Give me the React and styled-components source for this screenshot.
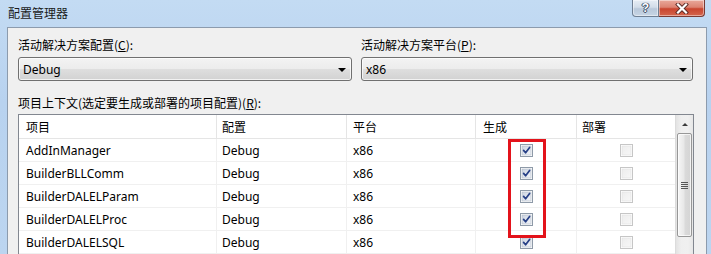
import React from "react";
import styled, { createGlobalStyle } from "styled-components";

const Global = createGlobalStyle`
  html, body { margin: 0; padding: 0; background: #b9d3ef; }
  body { font-family: "Noto Sans", "Noto Sans CJK SC", sans-serif; font-size: 12px; color: #000; }
`;

const Win = styled.div`
  width: 711px;
  height: 254px;
  overflow: hidden;
  display: flex;
  flex-direction: column;
  padding: 0 4px 0 7px;
  box-sizing: border-box;
  background: linear-gradient(180deg, #c3dbf3 0%, #b8d2ef 40%, #bcd5f0 100%);
`;

const TitleBar = styled.div`
  height: 27px;
  flex: none;
  display: flex;
  align-items: flex-start;
  justify-content: space-between;
  padding-right: 2px;
`;

const Title = styled.div`
  font-family: "Noto Sans CJK SC", sans-serif;
  font-size: 12px;
  line-height: 16px;
  padding: 5px 0 0 1px;
  color: #1a1a1a;
`;

const Caption = styled.div`
  display: flex;
`;

const CapBtn = styled.div`
  height: 17px;
  box-sizing: border-box;
  display: flex;
  align-items: center;
  justify-content: center;
  border: 1px solid ${(p) => (p.$close ? "#7a3a33" : "#6f7f93")};
  border-top: none;
  width: ${(p) => (p.$close ? "46px" : "27px")};
  border-radius: ${(p) => (p.$close ? "0 0 4px 0" : "0 0 0 4px")};
  border-left: ${(p) => (p.$close ? "none" : undefined)};
  background: ${(p) =>
    p.$close
      ? "linear-gradient(180deg, #e9a99c 0%, #dc8372 45%, #c9452f 55%, #d4654d 100%)"
      : "linear-gradient(180deg, #e6edf5 0%, #d3dde9 45%, #b9c8da 55%, #c7d5e5 100%)"};
  box-shadow: inset 0 0 0 1px rgba(255, 255, 255, 0.45);
`;

const Q = styled.span`
  font-family: "Liberation Sans", sans-serif;
  font-weight: bold;
  font-size: 12px;
  line-height: 12px;
  color: #fff;
  text-shadow: 0 0 1px #2a3a55, 0 0 1px #2a3a55, 1px 0 0 #4a5a75, -1px 0 0 #4a5a75, 0 1px 0 #4a5a75;
`;

const Panel = styled.div`
  flex: 1;
  min-height: 0;
  background: #f0f0f0;
  border: 1px solid #8c9bad;
  border-bottom: none;
  padding: 9px 12px 0 10px;
  display: flex;
  flex-direction: column;
`;

const Label = styled.div`
  font-family: "Noto Sans CJK SC", sans-serif;
  font-size: 12px;
  line-height: 16px;
  height: 16px;
  white-space: nowrap;
  u { text-decoration: underline; text-underline-offset: 1px; }
`;

const ComboRow = styled.div`
  display: grid;
  grid-template-columns: 334px 1fr;
  column-gap: 9px;
`;

const Field = styled.div`
  display: flex;
  flex-direction: column;
  gap: 4px;
`;

const Combo = styled.div`
  height: 24px;
  box-sizing: border-box;
  border: 1px solid #707070;
  border-radius: 3px;
  margin-right: ${(p) => p.$mr || 0}px;
  background: linear-gradient(180deg, #f3f3f3 0%, #ececec 48%, #dedede 52%, #d2d2d2 100%);
  box-shadow: inset 0 0 0 1px rgba(255, 255, 255, 0.7);
  display: flex;
  align-items: center;
  justify-content: space-between;
  padding: 0 5px 0 4px;
  font-size: 12px;
`;

const Arrow = styled.span`
  width: 0;
  height: 0;
  border-left: 4px solid transparent;
  border-right: 4px solid transparent;
  border-top: 4px solid #000;
  margin-top: 1px;
`;

const GridLabel = styled(Label)`
  margin-top: 14px;
  margin-bottom: 3px;
`;

const Grid = styled.div`
  position: relative;
  border: 1px solid #828790;
  border-bottom: none;
  background: #fff;
  display: flex;
  flex: 1;
  min-height: 0;
`;

const Table = styled.div`
  width: 656px;
  display: flex;
  flex-direction: column;
`;

const Row = styled.div`
  display: grid;
  grid-template-columns: 198px 130px 129px 101px 98px;
  height: ${(p) => (p.$head ? 24 : 23)}px;
  box-sizing: border-box;
  border-bottom: 1px solid ${(p) => (p.$head ? "#e5e5e5" : "#f0f0f0")};
  flex: none;
`;

const Cell = styled.div`
  display: flex;
  align-items: center;
  justify-content: ${(p) => (p.$center ? "center" : "flex-start")};
  padding-left: ${(p) => (p.$center ? 0 : p.$pl || 6)}px;
  font-family: ${(p) => (p.$cjk ? '"Noto Sans CJK SC", sans-serif' : '"Noto Sans", sans-serif')};
  font-size: 12px;
  white-space: nowrap;
  border-right: 1px solid ${(p) => (p.$head ? "#e5e5e5" : "#f0f0f0")};
  &:last-child { border-right: none; }
  padding-bottom: ${(p) => (p.$head ? 1 : 0)}px;
`;

const Scroll = styled.div`
  width: 18px;
  box-sizing: border-box;
  border-left: 1px solid #dcdcdc;
  background: linear-gradient(90deg, #e3e3e3 0%, #efefef 30%, #f0f0f0 70%, #e7e7e7 100%);
  display: flex;
  flex-direction: column;
  align-items: center;
`;

const ScrollBtn = styled.div`
  height: 17px;
  width: 100%;
  display: flex;
  align-items: center;
  justify-content: center;
  padding-top: 2px;
  box-sizing: border-box;
`;

const UpArrow = styled.span`
  width: 0;
  height: 0;
  border-left: 3px solid transparent;
  border-right: 3px solid transparent;
  border-bottom: 3px solid #3c3c3c;
`;

const Thumb = styled.div`
  width: 15px;
  height: 104px;
  margin-top: 1px;
  box-sizing: border-box;
  border: 1px solid #979797;
  border-radius: 2px;
  background: linear-gradient(90deg, #f6f6f6 0%, #e8e8e8 45%, #dadada 55%, #d4d4d4 100%);
  box-shadow: inset 0 0 0 1px rgba(255, 255, 255, 0.7);
  display: flex;
  align-items: center;
  justify-content: center;
`;

const Mark = styled.div`
  position: absolute;
  left: 489px;
  top: 24px;
  width: 38px;
  height: 99px;
  box-sizing: border-box;
  border: 3px solid #e3131b;
  pointer-events: none;
`;

const Check = ({ on }) => (
  <svg width="13" height="13" viewBox="0 0 13 13">
    <defs>
      <linearGradient id={on ? "cbOn" : "cbOff"} x1="0" y1="0" x2="1" y2="1">
        <stop offset="0" stopColor={on ? "#cbd3e0" : "#ededed"} />
        <stop offset="1" stopColor={on ? "#f4f6fa" : "#f7f7f7"} />
      </linearGradient>
    </defs>
    <rect x="0.5" y="0.5" width="12" height="12" fill="#fff" stroke={on ? "#8e9aa8" : "#c6c6c6"} />
    <rect x="2" y="2" width="9" height="9" fill={`url(#${on ? "cbOn" : "cbOff"})`} stroke={on ? "#aeb8c6" : "#e0e0e0"} strokeWidth="0.6" />
    {on && <path d="M3.6 6.4 L5.6 8.8 L9.6 3.4" fill="none" stroke="#263f86" strokeWidth="1.7" strokeLinecap="round" strokeLinejoin="round" />}
  </svg>
);

const Grip = () => (
  <svg width="7" height="7" viewBox="0 0 7 7">
    {[0.5, 2.5, 4.5, 6.5].map((y) => (
      <line key={y} x1="0" y1={y} x2="7" y2={y} stroke="#555" strokeWidth="1" />
    ))}
  </svg>
);

const CloseX = () => (
  <svg width="14" height="11" viewBox="0 0 14 11">
    <path d="M3 1.5 L11 9.5 M11 1.5 L3 9.5" stroke="#5a2a25" strokeWidth="4" strokeLinecap="square" />
    <path d="M3 1.5 L11 9.5 M11 1.5 L3 9.5" stroke="#fff" strokeWidth="2.2" strokeLinecap="square" />
  </svg>
);

const projects = ["AddInManager", "BuilderBLLComm", "BuilderDALELParam", "BuilderDALELProc", "BuilderDALELSQL"];

export default function App() {
  return (
    <>
      <Global />
      <Win>
        <TitleBar>
          <Title>配置管理器</Title>
          <Caption>
            <CapBtn><Q>?</Q></CapBtn>
            <CapBtn $close><CloseX /></CapBtn>
          </Caption>
        </TitleBar>
        <Panel>
          <ComboRow>
            <Field>
              <Label>活动解决方案配置(<u>C</u>):</Label>
              <Combo>Debug<Arrow /></Combo>
            </Field>
            <Field>
              <Label>活动解决方案平台(<u>P</u>):</Label>
              <Combo $mr={1}>x86<Arrow /></Combo>
            </Field>
          </ComboRow>
          <GridLabel>项目上下文(选定要生成或部署的项目配置)(<u>R</u>):</GridLabel>
          <Grid>
            <Table>
              <Row $head>
                <Cell $head $cjk $pl={7}>项目</Cell>
                <Cell $head $cjk $pl={5}>配置</Cell>
                <Cell $head $cjk>平台</Cell>
                <Cell $head $cjk $pl={7}>生成</Cell>
                <Cell $head $cjk $pl={5}>部署</Cell>
              </Row>
              {projects.map((p) => (
                <Row key={p}>
                  <Cell $pl={7}>{p}</Cell>
                  <Cell $pl={5}>Debug</Cell>
                  <Cell>x86</Cell>
                  <Cell $center><Check on /></Cell>
                  <Cell $center><Check /></Cell>
                </Row>
              ))}
            </Table>
            <Scroll>
              <ScrollBtn><UpArrow /></ScrollBtn>
              <Thumb><Grip /></Thumb>
            </Scroll>
            <Mark />
          </Grid>
        </Panel>
      </Win>
    </>
  );
}
